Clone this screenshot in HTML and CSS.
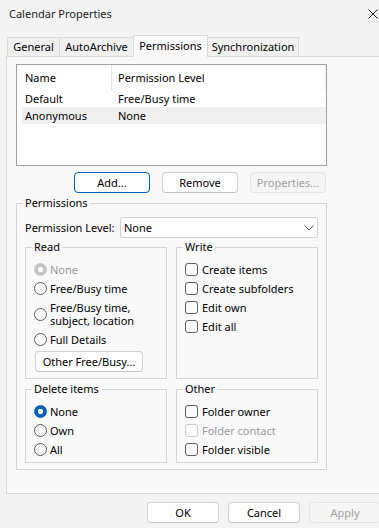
FILE: index.html
```html
<!DOCTYPE html>
<html lang="en">
<head>
<meta charset="utf-8">
<title>Calendar Properties</title>
<link rel="stylesheet" href="styles.css">
</head>
<body>
<div class="dialog">
  <div class="titlebar">
    <span class="title">Calendar Properties</span>
    <svg class="close" width="10" height="10" viewBox="0 0 10 10"><path d="M0.5 0.5 L9.5 9.5 M9.5 0.5 L0.5 9.5" stroke="#1b1b1b" stroke-width="1" fill="none"/></svg>
  </div>
  <div class="tabs">
    <div class="tab tab-general">General</div>
    <div class="tab tab-auto">AutoArchive</div>
    <div class="tab tab-perm active">Permissions</div>
    <div class="tab tab-sync">Synchronization</div>
  </div>
  <div class="panel">
    <div class="panel-body">
      <div class="listbox">
        <div class="list-header">
          <div class="col-name">Name</div>
          <div class="col-level">Permission Level</div>
        </div>
        <div class="list-row"><span class="cell-name">Default</span><span class="cell-level">Free/Busy time</span></div>
        <div class="list-row selected"><span class="cell-name">Anonymous</span><span class="cell-level">None</span></div>
      </div>
      <div class="list-actions">
        <button class="btn btn-focus">Add...</button>
        <button class="btn">Remove</button>
        <button class="btn" disabled>Properties...</button>
      </div>
      <fieldset class="group group-main">
        <legend>Permissions</legend>
        <div class="level-row">
          <span class="level-label">Permission Level:</span>
          <div class="select"><span>None</span><svg width="10" height="6" viewBox="0 0 10 6"><path d="M0.5 0.5 L5 5 L9.5 0.5" stroke="#5f5f5f" stroke-width="1" fill="none"/></svg></div>
        </div>
        <div class="subgrid">
          <fieldset class="group sub">
            <legend>Read</legend>
            <div class="opt disabled"><span class="radio checked-dis"></span><span>None</span></div>
            <div class="opt"><span class="radio"></span><span>Free/Busy time</span></div>
            <div class="opt two-line"><span class="radio"></span><span>Free/Busy time,<br>subject, location</span></div>
            <div class="opt"><span class="radio"></span><span>Full Details</span></div>
            <button class="btn btn-other">Other Free/Busy...</button>
          </fieldset>
          <fieldset class="group sub">
            <legend>Write</legend>
            <div class="opt chk"><span class="check"></span><span>Create items</span></div>
            <div class="opt chk"><span class="check"></span><span>Create subfolders</span></div>
            <div class="opt chk"><span class="check"></span><span>Edit own</span></div>
            <div class="opt chk"><span class="check"></span><span>Edit all</span></div>
          </fieldset>
          <fieldset class="group sub sub-bottom">
            <legend>Delete items</legend>
            <div class="opt"><span class="radio checked"></span><span>None</span></div>
            <div class="opt"><span class="radio"></span><span>Own</span></div>
            <div class="opt"><span class="radio"></span><span>All</span></div>
          </fieldset>
          <fieldset class="group sub sub-bottom">
            <legend>Other</legend>
            <div class="opt chk"><span class="check"></span><span>Folder owner</span></div>
            <div class="opt chk disabled"><span class="check check-dis"></span><span>Folder contact</span></div>
            <div class="opt chk"><span class="check"></span><span>Folder visible</span></div>
          </fieldset>
        </div>
      </fieldset>
    </div>
  </div>
  <div class="footer">
    <button class="btn">OK</button>
    <button class="btn">Cancel</button>
    <button class="btn" disabled>Apply</button>
  </div>
</div>
</body>
</html>
```
FILE: styles.css
```css
* { box-sizing: border-box; }
html, body { margin: 0; padding: 0; }
body {
  width: 379px;
  height: 528px;
  overflow: hidden;
  background: #f3f3f3;
  font-family: "Segoe UI", "Noto Sans", sans-serif;
  font-size: 11px;
  color: #000;
}
.dialog { width: 388px; height: 528px; }

.titlebar {
  height: 27px;
  display: flex;
  align-items: center;
  justify-content: space-between;
  padding: 0 10px 0 9px;
}
.title { color: #1b1b1b; }
.close { display: block; }

.tabs {
  display: flex;
  align-items: flex-end;
  height: 29px;
  padding: 8px 0 0 7px;
}
.tab {
  height: 19px;
  border: 1px solid #d9d9d9;
  border-bottom: none;
  background: #f0f0f0;
  margin-right: -1px;
  text-align: center;
  line-height: 18px;
  white-space: nowrap;
}
.tab.active {
  height: 22px;
  margin-bottom: -1px;
  background: #f9f9f9;
  line-height: 19px;
  position: relative;
  z-index: 1;
}
.tab-general { width: 53px; }
.tab-auto { width: 75px; }
.tab-perm { width: 75px; }
.tab-sync { width: 92px; }

.panel {
  margin: 0 6px;
  height: 438px;
  border: 1px solid #d9d9d9;
  background: #f9f9f9;
  padding: 7px 9px;
}
.panel-body { width: 311px; }

.listbox {
  height: 102px;
  border: 1px solid #a0a0a0;
  background: #fff;
}
.list-header {
  display: flex;
  height: 25px;
  border-right: 1px solid #ececec;
}
.col-name {
  width: 95px;
  padding-left: 8px;
  border-right: 1px solid #e5e5e5;
  line-height: 25px;
}
.col-level { padding-left: 6px; line-height: 25px; }
.list-row {
  display: flex;
  height: 17px;
  line-height: 17px;
  margin-left: 5px;
}
.list-row.selected { background: #f0f0f0; }
.cell-name { width: 96px; padding-left: 3px; }

.list-actions {
  display: flex;
  justify-content: flex-end;
  gap: 12px;
  margin-top: 6px;
  padding-right: 1px;
}
.btn {
  width: 76px;
  height: 21px;
  border: 1px solid #d0d0d0;
  border-bottom-color: #c2c2c2;
  border-radius: 4px;
  background: #fdfdfd;
  font: inherit;
  color: #000;
  padding: 0;
  line-height: 19px;
  text-align: center;
}
.btn-focus { border-color: #005fb8; }
.btn:disabled {
  color: #a0a0a0;
  background: #f5f5f5;
  border-color: #e3e3e3;
}

.group {
  border: 1px solid #d5d5d5;
  margin: 0;
  min-width: 0;
}
.group legend {
  padding: 0 2px;
  margin-left: -2px;
  line-height: 16px;
}
.group-main {
  margin-top: 2px;
  padding: 6px 8px 6px;
}

.level-row {
  display: flex;
  align-items: center;
  height: 21px;
}
.level-label { width: 95px; flex: none; }
.select {
  flex: 1;
  height: 21px;
  border: 1px solid #d0d0d0;
  border-radius: 3px;
  background: #fff;
  display: flex;
  align-items: center;
  justify-content: space-between;
  padding: 0 3px 0 3px;
}
.select svg { display: block; }

.subgrid {
  display: grid;
  grid-template-columns: 142px 142px;
  column-gap: 9px;
  row-gap: 2px;
  margin-top: 1px;
}
.sub { padding: 5px 8px 6px; }
.sub-bottom { padding-bottom: 3px; }

.opt {
  display: flex;
  align-items: center;
  height: 19px;
  gap: 3px;
  white-space: nowrap;
}
.opt.chk { gap: 4px; }
.opt.two-line { height: 32px; line-height: 13px; }
.opt.disabled { color: #9a9a9a; }

.radio {
  flex: none;
  width: 13px;
  height: 13px;
  border: 1px solid #5d5d5d;
  border-radius: 50%;
  background: #fbfbfb;
}
.radio.checked {
  border-color: #005fb8;
  background: radial-gradient(circle, #fff 0 2.4px, #005fb8 3px);
}
.radio.checked-dis {
  border-color: #c5c5c5;
  background: radial-gradient(circle, #fff 0 2.4px, #c5c5c5 3px);
}
.check {
  flex: none;
  width: 13px;
  height: 13px;
  border: 1px solid #5d5d5d;
  border-radius: 3px;
  background: #fbfbfb;
}
.check.check-dis { border-color: #c9c9c9; }

.btn-other {
  display: block;
  width: 108px;
  margin: 2px 0 0 1px;
}

.footer {
  display: flex;
  justify-content: flex-end;
  gap: 9px;
  padding: 8px 7px 0 0;
}
.footer .btn { width: 72px; }
```
